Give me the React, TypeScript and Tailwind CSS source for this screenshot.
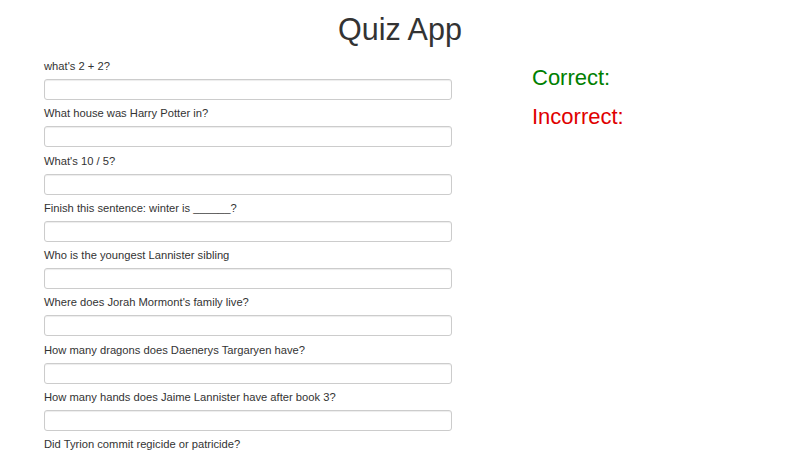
import React, { useState } from 'react';

const questions: string[] = [
  "what's 2 + 2?",
  'What house was Harry Potter in?',
  "What's 10 / 5?",
  'Finish this sentence: winter is ______?',
  'Who is the youngest Lannister sibling',
  "Where does Jorah Mormont's family live?",
  'How many dragons does Daenerys Targaryen have?',
  'How many hands does Jaime Lannister have after book 3?',
  'Did Tyrion commit regicide or patricide?',
];

const App: React.FC = () => {
  const [answers, setAnswers] = useState<string[]>(Array(questions.length).fill(''));

  const update = (i: number, value: string) => {
    setAnswers(prev => prev.map((a, idx) => (idx === i ? value : a)));
  };

  return (
    <div className="w-[800px] h-[450px] overflow-hidden bg-white text-[#333] font-['Liberation_Sans',Arial,sans-serif]">
      <h1 className="pt-[11px] text-center text-[30.5px] leading-[36px] font-normal">Quiz App</h1>

      <div className="flex pl-[44px] pt-[11px]">
        {/* Questions */}
        <div className="w-[408px] flex flex-col">
          {questions.map((q, i) => (
            <div key={i} className="mb-[5.3px]">
              <label className="block text-[11.2px] leading-[16px] mb-[5px]">{q}</label>
              <input
                type="text"
                value={answers[i]}
                onChange={e => update(i, e.target.value)}
                className="block w-full h-[21px] px-2 text-[11.2px] border border-[#ccc] rounded-[3px] shadow-[inset_0_1px_1px_rgba(0,0,0,0.075)] outline-none"
              />
            </div>
          ))}
        </div>

        {/* Score */}
        <div className="ml-[80px] mt-[7px] flex flex-col">
          <div className="text-[22px] leading-[26px] text-[#008000]">Correct:</div>
          <div className="mt-[13px] text-[22px] leading-[26px] text-[#e00000]">Incorrect:</div>
        </div>
      </div>
    </div>
  );
};

export default App;
